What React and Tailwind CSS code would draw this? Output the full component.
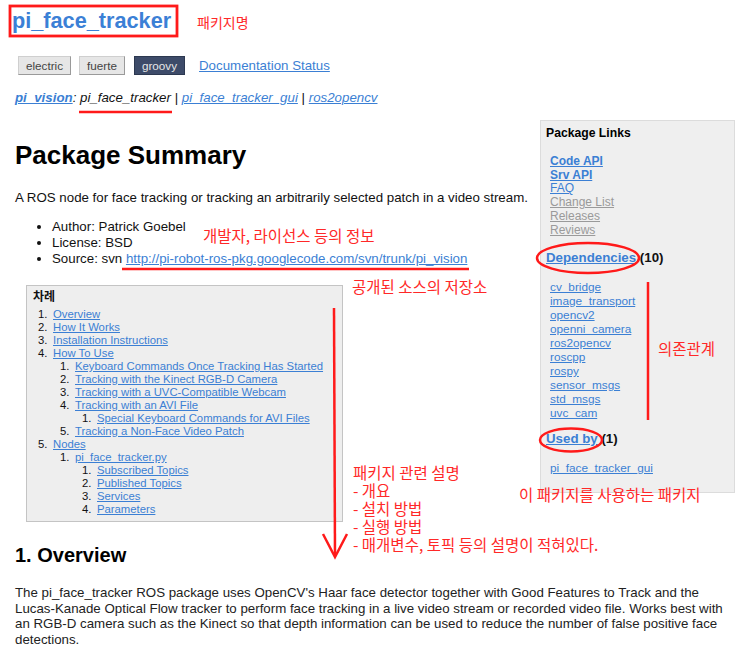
import React from "react";

const LINK = "text-[#3b7fd4] underline";

const tocItems = [
  { n: "1.", t: "Overview", l: 0 },
  { n: "2.", t: "How It Works", l: 0 },
  { n: "3.", t: "Installation Instructions", l: 0 },
  { n: "4.", t: "How To Use", l: 0 },
  { n: "1.", t: "Keyboard Commands Once Tracking Has Started", l: 1 },
  { n: "2.", t: "Tracking with the Kinect RGB-D Camera", l: 1 },
  { n: "3.", t: "Tracking with a UVC-Compatible Webcam", l: 1 },
  { n: "4.", t: "Tracking with an AVI File", l: 1 },
  { n: "1.", t: "Special Keyboard Commands for AVI Files", l: 2 },
  { n: "5.", t: "Tracking a Non-Face Video Patch", l: 1 },
  { n: "5.", t: "Nodes", l: 0 },
  { n: "1.", t: "pi_face_tracker.py", l: 1 },
  { n: "1.", t: "Subscribed Topics", l: 2 },
  { n: "2.", t: "Published Topics", l: 2 },
  { n: "3.", t: "Services", l: 2 },
  { n: "4.", t: "Parameters", l: 2 },
];

const deps = [
  "cv_bridge",
  "image_transport",
  "opencv2",
  "openni_camera",
  "ros2opencv",
  "roscpp",
  "rospy",
  "sensor_msgs",
  "std_msgs",
  "uvc_cam",
];

const indent = ["pl-[11px]", "pl-[33px]", "pl-[55px]"];

function Note({ className, children }) {
  return (
    <div
      className={`absolute leading-[18px] text-[#ff2828] whitespace-nowrap ${className}`}
      style={{ fontFamily: '"Noto Sans CJK KR", sans-serif' }}
    >
      {children}
    </div>
  );
}

export default function App() {
  return (
    <div
      className="relative w-[740px] h-[651px] overflow-hidden bg-white text-[#111] pl-[15px] pr-[5px]"
      style={{ fontFamily: '"Liberation Sans", Arial, sans-serif' }}
    >
      {/* header */}
      <div className="-ml-[3px] pt-[8px] text-[21.7px] leading-[26px] font-bold text-[#3b80d6]">
        pi_face_tracker
      </div>

      <div className="mt-[22px] flex items-center h-[19px] text-[11.7px]">
        <span className="ml-[3px] h-[19px] px-[7px] flex items-center bg-[#e6e6e6] text-[#444] border border-[#cfcfcf] border-r-[#9a9a9a] border-b-[#9a9a9a]">
          electric
        </span>
        <span className="ml-[8px] h-[19px] px-[7px] flex items-center bg-[#e6e6e6] text-[#444] border border-[#cfcfcf] border-r-[#9a9a9a] border-b-[#9a9a9a]">
          fuerte
        </span>
        <span className="ml-[9px] h-[19px] px-[7px] flex items-center bg-[#3d4b69] text-[#e6e6e6] border border-[#2c3850]">
          groovy
        </span>
        <a className={`ml-[14px] text-[13.3px] ${LINK}`}>Documentation Status</a>
      </div>

      <div className="mt-[15px] text-[13.3px] leading-[16px]">
        <a className={`font-bold italic ${LINK}`}>pi_vision</a>
        <span className="italic">: pi_face_tracker </span>|{" "}
        <a className={`italic ${LINK}`}>pi_face_tracker_gui</a> |{" "}
        <a className={`italic ${LINK}`}>ros2opencv</a>
      </div>

      {/* main row */}
      <div className="mt-[14px] flex items-start">
        <div className="w-[525px]">
          <h1 className="mt-[20px] text-[26px] leading-[30px] font-bold text-black">
            Package Summary
          </h1>
          <p className="mt-[20px] text-[13.3px] leading-[16px]">
            A ROS node for face tracking or tracking an arbitrarily selected patch in a video stream.
          </p>
          <ul className="mt-[13px] list-disc pl-[37px] text-[13.3px] leading-[16px]">
            <li>Author: Patrick Goebel</li>
            <li>License: BSD</li>
            <li>
              Source: svn{" "}
              <a className={LINK}>http://pi-robot-ros-pkg.googlecode.com/svn/trunk/pi_vision</a>
            </li>
          </ul>

          <div className="mt-[18px] ml-[11px] w-[317px] h-[237px] bg-[#eeeeee] border border-[#c4c4c4] pt-[4px] text-[11.3px]">
            <div
              className="pl-[6px] font-bold leading-[14px] text-[12px]"
              style={{ fontFamily: '"Liberation Sans", "Noto Sans CJK KR", sans-serif' }}
            >
              차례
            </div>
            <div className="mt-[4px]">
              {tocItems.map((it, i) => (
                <div key={i} className={`flex leading-[13px] ${indent[it.l]}`}>
                  <span className="w-[15px] shrink-0">{it.n}</span>
                  <a className={LINK}>{it.t}</a>
                </div>
              ))}
            </div>
          </div>
        </div>

        {/* sidebar */}
        <div className="w-[195px] h-[373px] bg-[#efefef] border border-[#dcdcdc] pt-[4px] pl-[5px]">
          <div className="text-[12.2px] leading-[16px] font-bold text-black">Package Links</div>
          <div className="mt-[14px] ml-[4px] text-[12px] leading-[13.7px] flex flex-col items-start">
            <a className={`font-bold ${LINK}`}>Code API</a>
            <a className={`font-bold ${LINK}`}>Srv API</a>
            <a className={LINK}>FAQ</a>
            <a className="text-[#9a9a9a] underline">Change List</a>
            <a className="text-[#9a9a9a] underline">Releases</a>
            <a className="text-[#9a9a9a] underline">Reviews</a>
          </div>
          <div className="mt-[12.8px] text-[13.3px] leading-[16px] font-bold">
            <a className={LINK}>Dependencies</a> (10)
          </div>
          <div className="mt-[14px] ml-[4px] text-[11.8px] leading-[14px] flex flex-col items-start">
            {deps.map((d) => (
              <a key={d} className={LINK}>
                {d}
              </a>
            ))}
          </div>
          <div className="mt-[11px] text-[13.3px] leading-[16px] font-bold">
            <a className={LINK}>Used by</a> (1)
          </div>
          <div className="mt-[14px] ml-[4px] text-[11.8px] leading-[14px]">
            <a className={LINK}>pi_face_tracker_gui</a>
          </div>
        </div>
      </div>

      <h2 className="mt-[21px] text-[20px] leading-[24px] font-bold text-black">1. Overview</h2>
      <p className="mt-[18px] w-[720px] text-[13.3px] leading-[15.7px] text-[#222]">
        The pi_face_tracker ROS package uses OpenCV's Haar face detector together with Good Features
        to Track and the Lucas-Kanade Optical Flow tracker to perform face tracking in a live video
        stream or recorded video file. Works best with an RGB-D camera such as the Kinect so that
        depth information can be used to reduce the number of false positive face detections.
      </p>

      {/* annotations */}
      <svg
        className="absolute left-0 top-0 pointer-events-none"
        width="740"
        height="651"
        viewBox="0 0 740 651"
      >
        <g stroke="#ff1a1a" fill="none" strokeWidth="2.5">
          <rect x="10" y="6" width="167" height="30" strokeWidth="2.8" />
          <line x1="79" y1="112" x2="172" y2="112" />
          <line x1="122" y1="269" x2="469" y2="269" />
          <ellipse cx="588" cy="258" rx="51" ry="15" />
          <ellipse cx="571" cy="440" rx="31" ry="11.5" />
          <line x1="648" y1="282" x2="648" y2="420" />
          <line x1="334" y1="308" x2="335" y2="556" />
          <polyline points="323,534 335,557 347,534" />
        </g>
      </svg>

      <Note className="left-[197px] top-[13px] text-[14px]">패키지명</Note>
      <Note className="left-[203px] top-[226px] text-[15.5px]">개발자, 라이선스 등의 정보</Note>
      <Note className="left-[352px] top-[277px] text-[15.5px]">공개된 소스의 저장소</Note>
      <Note className="left-[658px] top-[339px] text-[15.5px]">의존관계</Note>
      <Note className="left-[353px] top-[463px] text-[15.5px]">
        패키지 관련 설명
        <br />- 개요
        <br />- 설치 방법
        <br />- 실행 방법
        <br />- 매개변수, 토픽 등의 설명이 적혀있다.
      </Note>
      <Note className="left-[519px] top-[485px] text-[15.5px]">이 패키지를 사용하는 패키지</Note>
    </div>
  );
}
